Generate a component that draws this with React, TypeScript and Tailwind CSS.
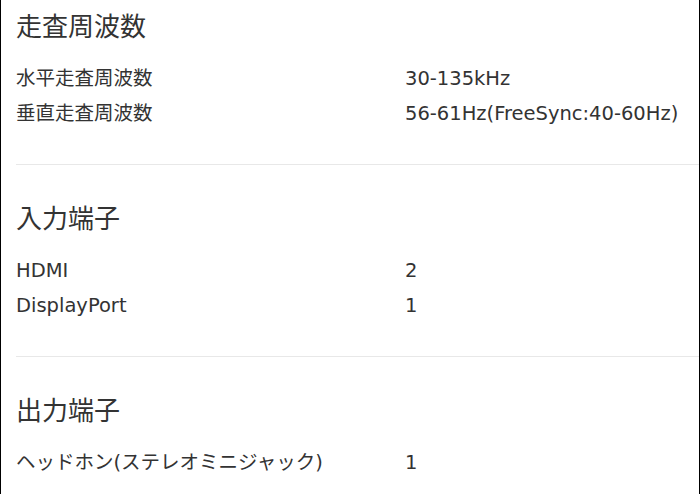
import React from "react";

type Row = [string, string];
const sections: { title: string; rows: Row[] }[] = [
  {
    title: "走査周波数",
    rows: [
      ["水平走査周波数", "30-135kHz"],
      ["垂直走査周波数", "56-61Hz(FreeSync:40-60Hz)"],
    ],
  },
  {
    title: "入力端子",
    rows: [
      ["HDMI", "2"],
      ["DisplayPort", "1"],
    ],
  },
  {
    title: "出力端子",
    rows: [["ヘッドホン(ステレオミニジャック)", "1"]],
  },
];

export default function App() {
  return (
    <div
      className="h-[494px] w-[700px] overflow-hidden bg-white border-l border-r border-black pl-[15px] text-[#333]"
      style={{ fontFamily: '"DejaVu Sans", "Noto Sans CJK JP", sans-serif' }}
    >
      {sections.map((s, i) => (
        <section
          key={s.title}
          className={`border-b border-[#e8e8e8] pb-[33px] ${i === 0 ? "pt-[9px]" : "pt-[36px]"}`}
        >
          <h2 className="h-9 text-[26px] leading-9 font-normal">{s.title}</h2>
          <div className="mt-[16px]">
            {s.rows.map(([k, v]) => (
              <div key={k} className="flex text-[19.5px] leading-[35px]">
                <div className="w-[389px] shrink-0">{k}</div>
                <div>{v}</div>
              </div>
            ))}
          </div>
        </section>
      ))}
    </div>
  );
}
